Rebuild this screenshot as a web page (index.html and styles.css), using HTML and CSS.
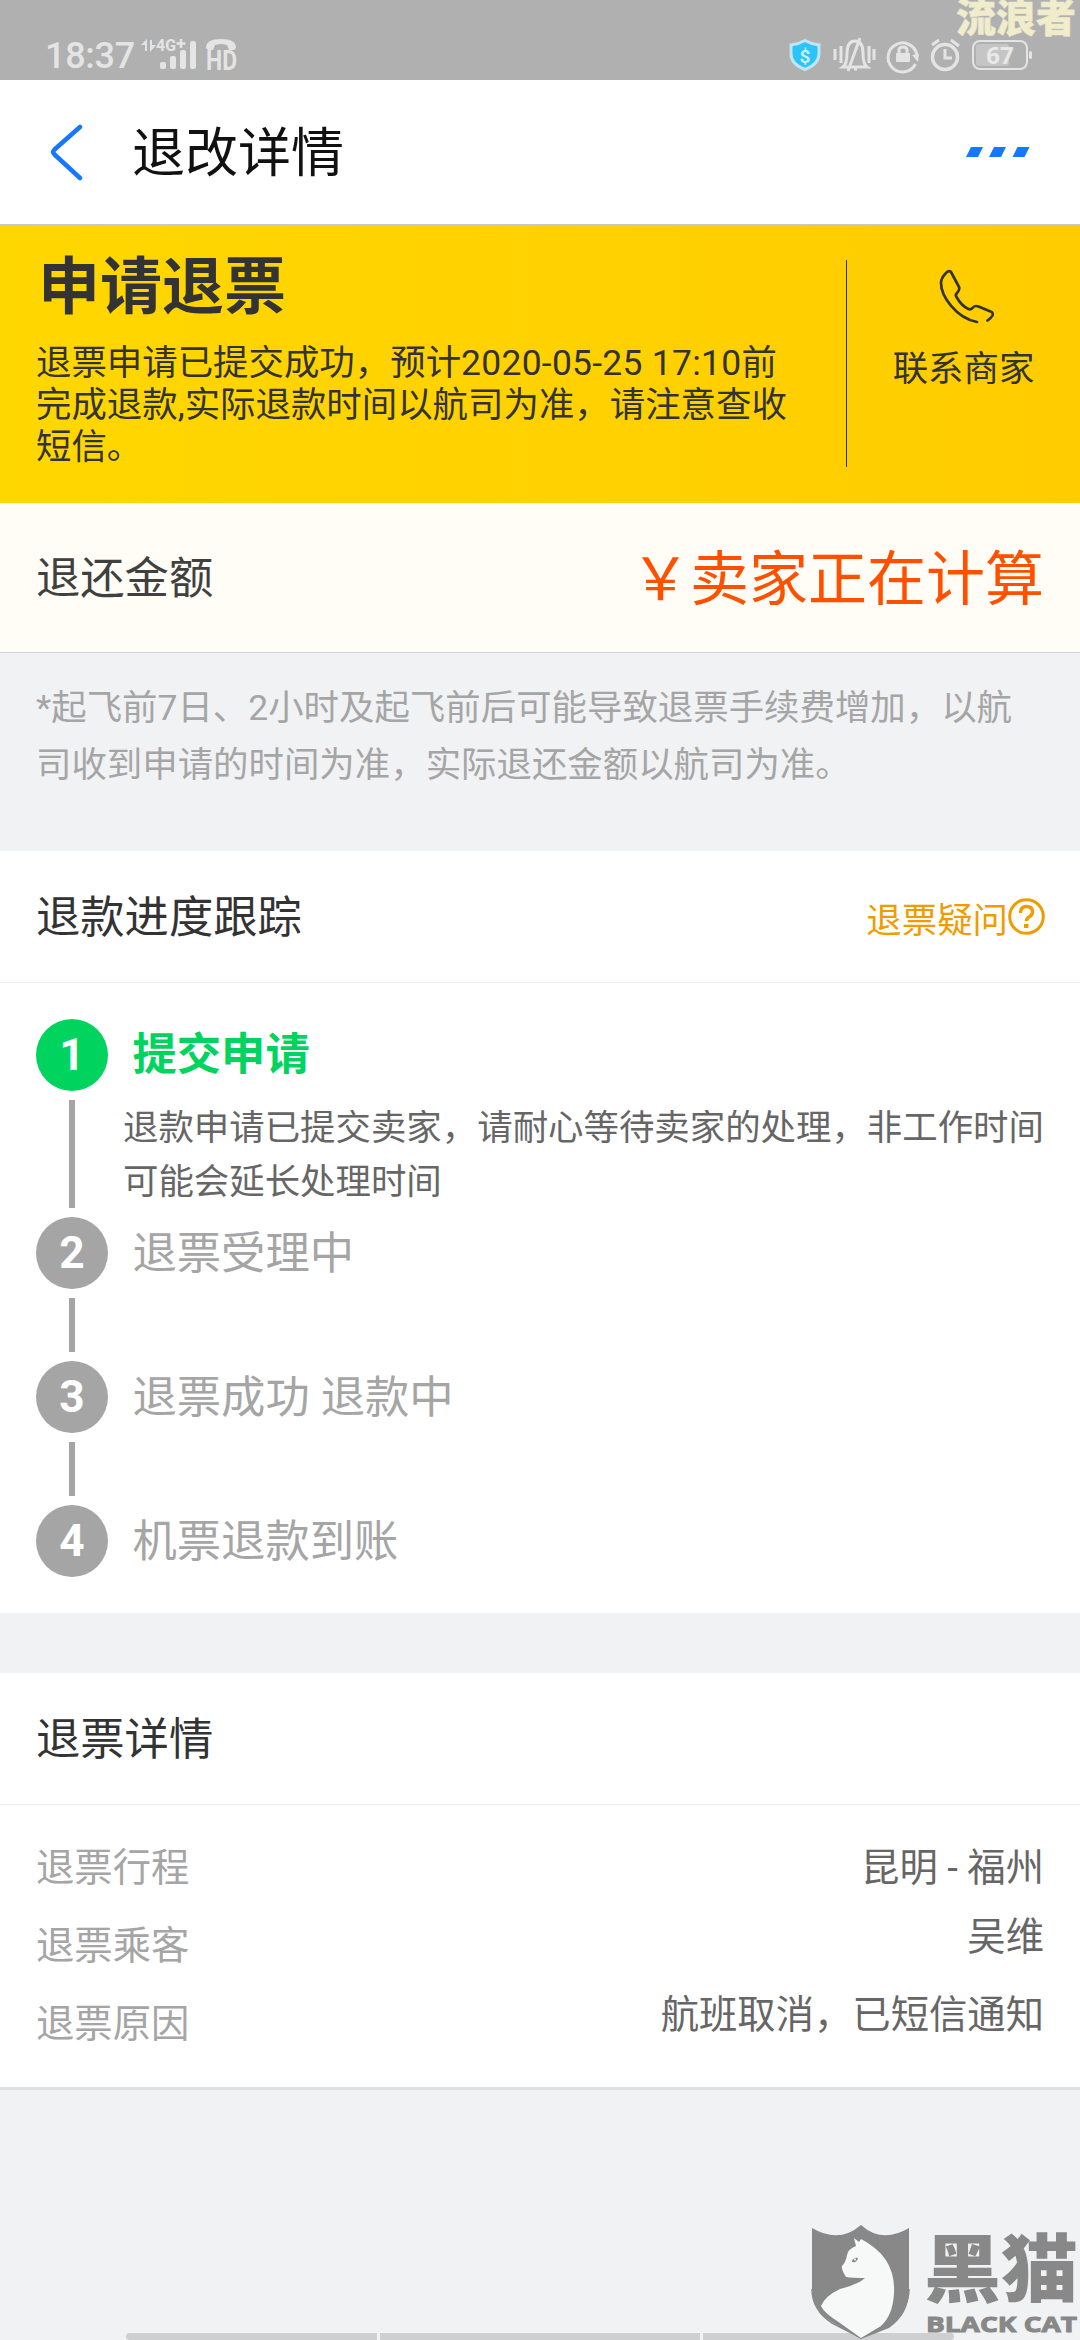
FILE: index.html
```html
<!DOCTYPE html>
<html lang="zh-CN">
<head>
<meta charset="utf-8">
<title>退改详情</title>
<link rel="stylesheet" href="styles.css">
</head>
<body>
<div class="screen">
  <div class="statusbar">
    <span class="clock">18:37</span>
    <svg class="status-left" width="100" height="80" viewBox="0 0 100 80" fill="#e4e4e4">
      <path d="M1 45 7 39v12H5v-6zM9 40h3v5h4l-6 7V40z"/>
      <text class="net" x="16" y="51">4G</text>
      <path d="M36.500 43.500h9M41 39v9" stroke="#e4e4e4" stroke-width="2.500"/>
      <rect x="20" y="62" width="6" height="7" rx="2"/><rect x="30" y="56" width="6" height="13" rx="2"/><rect x="40" y="50" width="6" height="19" rx="2"/><rect x="50" y="41" width="6" height="28" rx="2"/>
      <path d="M66 48q0-9 15-9t15 9l-2 2h-5l-2-5q-6-2-12 0l-2 5h-5z"/>
      <text class="hd" x="66" y="70" textLength="31" lengthAdjust="spacingAndGlyphs">HD</text>
    </svg>
    <svg class="status-right" width="250" height="80" viewBox="0 0 250 80" fill="none" stroke="#e4e4e4" stroke-width="3">
      <path d="M17 40.500q7 4 14 4.500v9q0 10-14 15.500Q3 64 3 54v-9q7-.5 14-4.500z" fill="#2bc4fa" stroke="#bfe6f5"/>
      <text class="dollar" x="17" y="62.500">$</text>
      <path d="M55 67q4-3 4-14 0-12 8-12t8 12q0 11 4 14zM60 71 72 38M47 49v11M53 46v17M81 46v17M86 49v11M66 69h3"/>
      <path d="M127.500 64A14.500 14.500 0 1 1 129 56"/><path d="m124 55 7-1-1 8z" fill="#e4e4e4" stroke="none"/>
      <rect x="108" y="53" width="14" height="9" rx="1" fill="#e4e4e4" stroke="none"/><path d="M111 54v-4q0-3 4-3t4 3v4"/>
      <circle cx="157" cy="57" r="12.500" stroke-width="3.500"/><path d="M157 49v9h7M144 45l7-5M163 40l8 6"/>
      <rect x="188" y="44" width="33" height="22" rx="3" fill="#c5c5c5" stroke="none"/>
      <rect x="185" y="41" width="54" height="28" rx="7" stroke-width="2"/><path d="M242.500 52.500v5" stroke-linecap="round"/>
      <text class="batt" x="212" y="64">67</text>
    </svg>
    <span class="nick">流浪者</span>
  </div>

  <header class="navbar">
    <svg class="back" width="34" height="60" viewBox="0 0 34 60" fill="none" stroke="#1677ff" stroke-width="4.500" stroke-linecap="round" stroke-linejoin="round"><path d="M31 5 5.500 27.500q-2.500 2.500 0 5L31 56"/></svg>
    <h1 class="nav-title">退改详情</h1>
    <svg class="more" width="64" height="10" viewBox="0 0 64 10" fill="#1677ff"><path d="M5 0h12l-5 10H0zM28 0h12l-5 10H23zM51.500 0h12l-5 10h-12z"/></svg>
  </header>

  <section class="banner">
    <div class="banner-main">
      <h2>申请退票</h2>
      <p>退票申请已提交成功，预计<span class="date">2020-05-25 17:10</span>前<br>完成退款,实际退款时间以航司为准，请注意查收<br>短信。</p>
    </div>
    <div class="contact">
      <svg width="56" height="56" viewBox="0 0 56 56" fill="none" stroke="#333" stroke-width="2.700" stroke-linecap="round" stroke-linejoin="round"><path d="M39 54C18 50 3 28 3 15q0-5 5-10 3-3 5-1l8 15q1 3-2 6-2 2-.5 4 5 9 12 12 2 1 4-1 2-3 6-1.500l12 5q3 1 2 4-1 2-5 5"/></svg>
      <span>联系商家</span>
    </div>
  </section>

  <section class="amount">
    <span class="amount-label">退还金额</span>
    <span class="amount-value">￥卖家正在计算</span>
  </section>
  <p class="note">*起飞前7日、2小时及起飞前后可能导致退票手续费增加，以航司收到申请的时间为准，实际退还金额以航司为准。</p>

  <section class="card">
    <div class="card-head">
      <h3>退款进度跟踪</h3>
      <a class="help">退票疑问<svg width="37" height="37" viewBox="0 0 37 37" fill="none" stroke="#f09c00" stroke-width="3"><circle cx="18.500" cy="18.500" r="16.800"/><path d="M12.500 15q0-6.500 6-6.500t6 5.500q0 3-3.500 5-2.500 1.500-2.500 4" stroke-width="3.400"/><path d="M16 26h4.500v4H16z" fill="#f09c00" stroke="none"/></svg></a>
    </div>
    <ol class="steps">
      <li class="step active"><div class="rail"><b>1</b><i></i></div><div class="body"><h4>提交申请</h4><p>退款申请已提交卖家，请耐心等待卖家的处理，非工作时间可能会延长处理时间</p></div></li>
      <li class="step"><div class="rail"><b>2</b><i></i></div><div class="body"><h4>退票受理中</h4></div></li>
      <li class="step"><div class="rail"><b>3</b><i></i></div><div class="body"><h4>退票成功 退款中</h4></div></li>
      <li class="step"><div class="rail"><b>4</b></div><div class="body"><h4>机票退款到账</h4></div></li>
    </ol>
  </section>

  <section class="card details">
    <div class="card-head"><h3>退票详情</h3></div>
    <div class="detail-cols">
      <div class="labels"><span>退票行程</span><span>退票乘客</span><span>退票原因</span></div>
      <div class="values"><span>昆明 - 福州</span><span>吴维</span><span>航班取消，已短信通知</span></div>
    </div>
  </section>

  <div class="gesture"><i></i><i></i><i></i></div>
  <div class="logo">
    <svg width="269" height="115" viewBox="0 0 269 115">
      <path d="M1 3Q28 19 50 0 71 19 98 3v63q0 23-20 37L50 114 21 97Q1 85 1 64z" fill="#888"/>
      <path d="M1 64q0 21 20 34l29 15 28-16q20-13 20-33" fill="none" stroke="#888" stroke-width="1.500"/>
      <path d="M43 13l5 4 2-3q35 18 33 54-1 22-13 33l-20 12-21-15Q13 88 10 81q4-10 19-17 19-5 25-11-12 0-19-1-5-8-4-11 4-4 5-11 1-6 9-9z" fill="#f7f8f8"/>
      <path d="M41 36q2-4 6-3-1 5-6 4z" fill="#888"/><circle cx="44" cy="34.500" r="1" fill="#fff"/>
      <text class="brand-cn" x="113" y="71" textLength="154" lengthAdjust="spacingAndGlyphs">黑猫</text>
      <text class="brand-en" x="115" y="107" textLength="151" lengthAdjust="spacingAndGlyphs">BLACK CAT</text>
    </svg>
  </div>
</div>
</body>
</html>
```
FILE: styles.css
```css
* { box-sizing: border-box; margin: 0; padding: 0; }
body { background: #f1f2f4; }
.screen {
  position: relative;
  width: 1080px;
  height: 2340px;
  overflow: hidden;
  font-family: Roboto, "Noto Sans CJK SC", sans-serif;
  font-size: 35.43px;
  color: #333;
}
h1, h2, h3, h4, i { font-weight: 400; font-style: normal; }

.statusbar { display: flex; height: 80px; padding-left: 45px; background: #b0b0b0; color: #e4e4e4; }
.clock { width: 95px; font-size: 36px; letter-spacing: -.3px; font-weight: 500; line-height: 113px; white-space: nowrap; }
.status-right { margin-left: 548px; flex: none; }
.status-left { flex: none; }
.net { font: bold 16px Roboto, sans-serif; }
.hd { font: bold 27px Roboto, sans-serif; }
.dollar { font: bold 19px Roboto, sans-serif; fill: #c8f0fc; stroke: none; text-anchor: middle; }
.batt { font: bold 24px "Noto Sans", sans-serif; fill: #e8e8e8; stroke: none; text-anchor: middle; }
.nick {
  position: absolute;
  top: -1px;
  left: 956px;
  font-size: 40px;
  font-weight: 900;
  line-height: 40px;
  color: #f1edcb;
  -webkit-text-stroke: .6px #e9e6d0;
}

.navbar { display: flex; align-items: center; height: 145px; padding: 0 50px 0 49px; background: #fff; border-bottom: 1px solid #c8c8cc; color: #111; }
.nav-title { margin: 3px 0 0 49px; font-size: 53px; line-height: 80px; }
.more { margin-left: auto; }

.banner { display: flex; height: 278px; padding: 35px 0 36px 36px; background: linear-gradient(90deg, #ffd700, #fc0); }
.banner-main { width: 810px; }
.banner-main h2 { height: 81px; margin-top: -13px; font-size: 62px; font-weight: 700; line-height: 81px; padding-left: 2px; }
.banner-main p { margin-top: 14px; line-height: 42px; white-space: nowrap; }
.date { letter-spacing: .28px; }
.contact { display: flex; flex-direction: column; align-items: center; width: 234px; padding-top: 8px; border-left: 1px solid #333; }
.contact svg { margin-left: 4px; }
.contact span { margin-top: 20px; line-height: 50px; }

.amount { display: flex; align-items: center; justify-content: space-between; height: 150px; padding: 0 36px 5px; background: #fffdf6; border-bottom: 1px solid #d2d2d2; }
.amount-label { font-size: 44.3px; color: #404040; }
.amount-value { margin-top: -1px; font-size: 59px; color: #ff5000; }
.note { height: 198px; padding: 27px 36px 0; line-height: 57.4px; color: #a5a5a5; }

.card { background: #fff; }
.card-head { display: flex; align-items: center; justify-content: space-between; height: 132px; padding: 0 35px 0 36px; border-bottom: 1px solid #ededed; }
.card-head h3 { margin-top: -5px; font-size: 44.3px; }
.help { display: flex; align-items: center; margin-top: 2px; color: #f09c00; }
.help svg { margin-top: -3px; }

.steps { height: 630px; padding: 36px 36px 0; list-style: none; }
.step { display: flex; height: 144px; }
.step.active { height: 198px; }
.rail { display: flex; flex-direction: column; align-items: center; gap: 9px; width: 72px; padding-bottom: 9px; }
.rail b { width: 72px; height: 72px; border-radius: 50%; background: #a5a5a5; color: #fff; font-size: 44.3px; line-height: 72px; text-align: center; }
.rail i { flex: 1; width: 6px; background: #a5a5a5; }
.body { width: 936px; }
.body h4 { margin-left: 24.5px; font-size: 44.3px; line-height: 74px; color: #a5a5a5; }
.active .rail b { background: #00d45f; }
.active h4 { font-weight: 700; line-height: 73px; color: #00d45f; }
.body p { margin-left: 15px; margin-top: 9px; line-height: 54px; color: #666; }

.details { margin-top: 60px; border-bottom: 3px solid #dfe0e1; }
.detail-cols { display: flex; justify-content: space-between; height: 282px; padding: 24px 36px; font-size: 38.35px; }
.labels, .values { display: flex; flex-direction: column; line-height: 78px; color: #a5a5a5; }
.values { text-align: right; color: #666; }
.values span:nth-child(2) { margin-top: -9px; }

.logo { position: absolute; left: 811px; top: 2225px; }
.brand-cn { font: 900 74px "Noto Sans CJK SC", sans-serif; fill: #888; }
.brand-en { font: bold 22px "Open Sans", sans-serif; fill: #888; stroke: #888; stroke-width: 1px; }
.gesture { position: absolute; left: 126px; top: 2333px; display: flex; gap: 3px; }
.gesture i { height: 7px; width: 251px; background: #cecfd1; }
.gesture i:nth-child(2) { width: 320px; }
.gesture i:first-child { border-radius: 5px 0 0 5px; }
.gesture i:last-child { border-radius: 0 5px 5px 0; }
```
